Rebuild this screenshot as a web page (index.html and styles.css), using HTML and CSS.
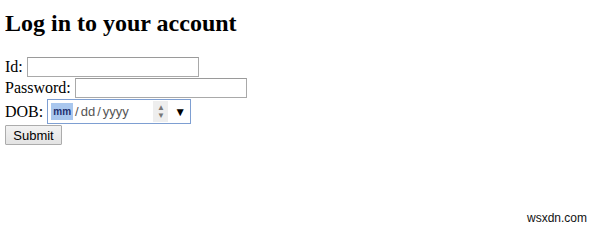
FILE: index.html
```html
<!DOCTYPE html>
<html lang="en">
<head>
  <meta charset="UTF-8">
  <title>Log in</title>
  <link rel="stylesheet" href="styles.css">
</head>
<body>

<h2>Log in to your account</h2>

<form class="login">
  <div class="row">Id:&nbsp;<input type="text" class="field id-field"></div>
  <div class="row">Password:&nbsp;<input type="password" class="field pass-field"></div>
  <div class="row row-date">DOB:&nbsp;
    <div class="date-field">
      <span class="seg-active">mm</span><span class="seg">/</span><span class="seg">dd</span><span class="seg">/</span><span class="seg">yyyy</span>
      <span class="spin"><i>&#9650;</i><i>&#9660;</i></span>
      <span class="drop">&#9660;</span>
    </div>
  </div>
  <div class="row"><button type="button" class="submit">Submit</button></div>
</form>

<div class="watermark">wsxdn.com</div>

</body>
</html>
```

FILE: styles.css
```css
body {
  font-family: "Liberation Serif", "Times New Roman", serif;
  font-size: 16px;
  color: #000;
  background: #fff;
  margin: 0 5px;
}
h2 {
  font-size: 24px;
  font-weight: 700;
  margin: 9px 0 20px;
  line-height: 28px;
}
.row {
  display: flex;
  align-items: center;
  height: 20px;
  margin-bottom: 1px;
}
.row-date {
  height: 25px;
  margin-bottom: 1px;
}
.field {
  box-sizing: border-box;
  height: 20px;
  border: 1px solid #a9a9a9;
  border-top-color: #9a9a9a;
  padding: 1px 2px;
  margin: 0;
  font-size: 13px;
}
.id-field { width: 172px; }
.pass-field { width: 172px; }
.date-field {
  box-sizing: border-box;
  width: 144px;
  height: 25px;
  border: 1px solid #7e9fd2;
  display: flex;
  align-items: center;
  padding-left: 3px;
  font-family: "Liberation Sans", Arial, sans-serif;
  font-size: 13px;
  color: #555;
}
.seg-active {
  background: #a9c7ee;
  color: #1d2f6e;
  font-size: 10px;
  font-weight: 700;
  line-height: 17px;
  padding: 0 2px;
}
.seg { margin-left: 2px; }
.spin {
  display: flex;
  flex-direction: column;
  justify-content: center;
  width: 15px;
  height: 21px;
  margin-left: auto;
  background: #eee;
  font-size: 8px;
  line-height: 8px;
  text-align: center;
  color: #777;
}
.spin i { font-style: normal; }
.drop {
  font-size: 12px;
  color: #000;
  margin: 0 4px 0 6px;
}
.submit {
  box-sizing: border-box;
  height: 20px;
  width: 57px;
  margin: 0;
  padding: 0;
  font-family: "Liberation Sans", Arial, sans-serif;
  font-size: 13px;
  color: #000;
  border: 1px solid #acacac;
  border-radius: 1px;
  background: linear-gradient(#f2f2f2, #e3e3e3);
}
.watermark {
  position: absolute;
  left: 527px;
  top: 211px;
  font-family: "Liberation Sans", Arial, sans-serif;
  font-size: 12px;
  color: #111;
}
```
